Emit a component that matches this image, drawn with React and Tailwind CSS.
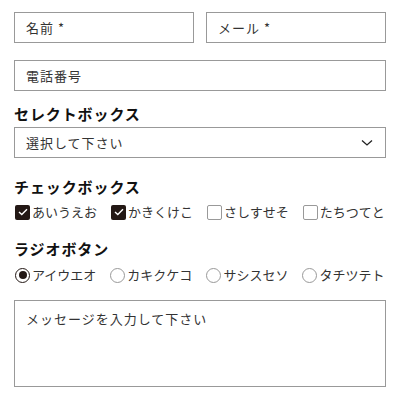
import React, { useState } from 'react';

const FONT = { fontFamily: '"Noto Sans CJK JP", "Noto Sans", sans-serif' };

const checks = [
  { label: 'あいうえお', checked: true },
  { label: 'かきくけこ', checked: true },
  { label: 'さしすせそ', checked: false },
  { label: 'たちつてと', checked: false },
];

const radios = ['アイウエオ', 'カキクケコ', 'サシスセソ', 'タチツテト'];

const Heading = ({ children, className }) => (
  <h2 className={`text-[15px] leading-[20px] font-bold tracking-[0.9px] text-[#111] ${className}`}>
    {children}
  </h2>
);

export default function App() {
  const [checked, setChecked] = useState(checks.map(c => c.checked));
  const [radio, setRadio] = useState(0);

  return (
    <div className="w-[400px] h-[400px] bg-white px-[14px] pt-[12px] text-[#333]" style={FONT}>
      {/* Name / Email */}
      <div className="flex gap-[12px]">
        <input
          placeholder="名前 *"
          className="w-[180px] h-[31px] border border-[#999] px-[11px] text-[13px] tracking-[1px] placeholder-[#333] outline-none"
        />
        <input
          placeholder="メール *"
          className="w-[180px] h-[31px] border border-[#999] px-[11px] text-[13px] tracking-[1px] placeholder-[#333] outline-none"
        />
      </div>

      <input
        placeholder="電話番号"
        className="mt-[17px] block w-[372px] h-[31px] border border-[#999] px-[11px] text-[13px] tracking-[1px] placeholder-[#333] outline-none"
      />

      {/* Select */}
      <Heading className="mt-[13px]">セレクトボックス</Heading>
      <div className="mt-[3px] w-[372px] h-[31px] border border-[#999] px-[11px] flex items-center justify-between text-[13px] tracking-[1px]">
        <span>選択して下さい</span>
        <svg width="12" height="8" viewBox="0 0 12 8" className="mr-[1px]">
          <path d="M1 1.5 L6 6 L11 1.5" fill="none" stroke="#222" strokeWidth="1.3" />
        </svg>
      </div>

      {/* Checkbox */}
      <Heading className="mt-[19px]">チェックボックス</Heading>
      <div className="mt-[5px] flex gap-[13px] text-[13px] leading-[20px] whitespace-nowrap">
        {checks.map((c, i) => (
          <label
            key={c.label}
            className="flex shrink-0 items-center gap-[2px] cursor-pointer"
            onClick={() => setChecked(prev => prev.map((v, j) => (j === i ? !v : v)))}
          >
            <span
              className={`ml-[1px] shrink-0 w-[15px] h-[15px] rounded-[2px] flex items-center justify-center ${
                checked[i] ? 'bg-[#231815]' : 'border border-[#999] bg-white'
              }`}
            >
              {checked[i] && (
                <svg width="10" height="8" viewBox="0 0 10 8">
                  <path d="M1 4 L3.8 6.6 L9 1.3" fill="none" stroke="#fff" strokeWidth="1.4" />
                </svg>
              )}
            </span>
            <span>{c.label}</span>
          </label>
        ))}
      </div>

      {/* Radio */}
      <Heading className="mt-[17px]">ラジオボタン</Heading>
      <div className="mt-[6px] flex gap-[13px] text-[13px] leading-[20px] whitespace-nowrap">
        {radios.map((r, i) => (
          <label key={r} className="flex shrink-0 items-center gap-[2px] cursor-pointer" onClick={() => setRadio(i)}>
            <span
              className={`ml-[1px] shrink-0 w-[15px] h-[15px] rounded-full flex items-center justify-center bg-white ${
                radio === i ? 'border-[1.5px] border-[#231815]' : 'border border-[#999]'
              }`}
            >
              {radio === i && <span className="w-[8px] h-[8px] rounded-full bg-[#231815]" />}
            </span>
            <span>{r}</span>
          </label>
        ))}
      </div>

      {/* Message */}
      <textarea
        placeholder="メッセージを入力して下さい"
        className="mt-[15px] block w-[372px] h-[87px] border border-[#999] px-[11px] py-[8px] text-[13px] tracking-[1px] placeholder-[#333] outline-none resize-none"
      />
    </div>
  );
}
